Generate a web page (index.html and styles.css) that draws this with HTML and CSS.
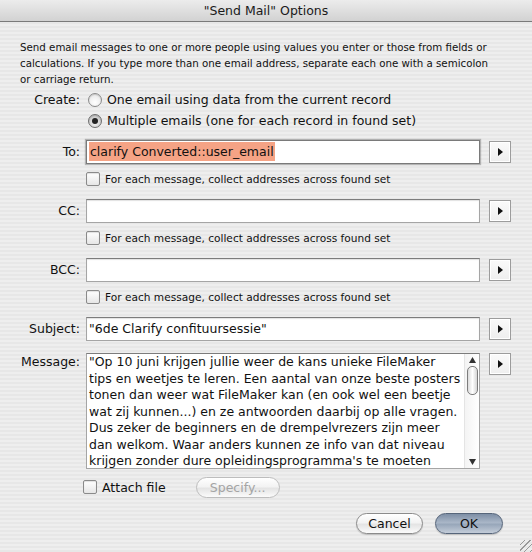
FILE: index.html
```html
<!DOCTYPE html>
<html>

<head>
    <title>"Send Mail" Options</title>
    <link rel="stylesheet" href="styles.css">
</head>

<body>
    <div class="window">
        <div class="titlebar">"Send Mail" Options</div>

        <div class="content">
            <p class="intro">Send email messages to one or more people using values you enter or those from fields or<br>
                calculations. If you type more than one email address, separate each one with a semicolon<br>
                or carriage return.</p>

            <div class="row create-row">
                <div class="label">Create:</div>
                <div class="options">
                    <div class="radio-line"><span class="radio"></span>One email using data from the current record</div>
                    <div class="radio-line"><span class="radio checked"></span>Multiple emails (one for each record in found set)</div>
                </div>
            </div>

            <div class="row field-row first">
                <div class="label">To:</div>
                <div class="field focused"><span class="selected-text">clarify Converted::user_email</span></div>
                <div class="pick-btn"><svg width="5" height="8" viewBox="0 0 5 8"><path d="M0 0 L5 4 L0 8 Z" fill="#111"/></svg></div>
            </div>
            <div class="check-line"><span class="checkbox"></span>For each message, collect addresses across found set</div>

            <div class="row field-row">
                <div class="label">CC:</div>
                <div class="field"></div>
                <div class="pick-btn"><svg width="5" height="8" viewBox="0 0 5 8"><path d="M0 0 L5 4 L0 8 Z" fill="#111"/></svg></div>
            </div>
            <div class="check-line"><span class="checkbox"></span>For each message, collect addresses across found set</div>

            <div class="row field-row">
                <div class="label">BCC:</div>
                <div class="field"></div>
                <div class="pick-btn"><svg width="5" height="8" viewBox="0 0 5 8"><path d="M0 0 L5 4 L0 8 Z" fill="#111"/></svg></div>
            </div>
            <div class="check-line"><span class="checkbox"></span>For each message, collect addresses across found set</div>

            <div class="row field-row">
                <div class="label">Subject:</div>
                <div class="field">"6de Clarify confituursessie"</div>
                <div class="pick-btn"><svg width="5" height="8" viewBox="0 0 5 8"><path d="M0 0 L5 4 L0 8 Z" fill="#111"/></svg></div>
            </div>

            <div class="row message-row">
                <div class="label">Message:</div>
                <div class="textarea">
                    <div class="message-text">"Op 10 juni krijgen jullie weer de kans unieke FileMaker<br>
                        tips en weetjes te leren. Een aantal van onze beste posters<br>
                        tonen dan weer wat FileMaker kan (en ook wel een beetje<br>
                        wat zij kunnen...) en ze antwoorden daarbij op alle vragen.<br>
                        Dus zeker de beginners en de drempelvrezers zijn meer<br>
                        dan welkom. Waar anders kunnen ze info van dat niveau<br>
                        krijgen zonder dure opleidingsprogramma's te moeten</div>
                    <div class="scrollbar">
                        <svg class="scroll-arrow" width="7" height="6" viewBox="0 0 7 6"><path d="M3.5 0 L7 6 L0 6 Z" fill="#333"/></svg>
                        <div class="scroll-thumb"></div>
                        <div class="scroll-track"></div>
                        <svg class="scroll-arrow" width="7" height="6" viewBox="0 0 7 6"><path d="M0 0 L7 0 L3.5 6 Z" fill="#333"/></svg>
                    </div>
                </div>
                <div class="pick-btn"><svg width="5" height="8" viewBox="0 0 5 8"><path d="M0 0 L5 4 L0 8 Z" fill="#111"/></svg></div>
            </div>

            <div class="attach-row">
                <span class="checkbox"></span>
                <span class="attach-label">Attach file</span>
                <div class="btn disabled">Specify...</div>
            </div>

            <div class="button-row">
                <div class="btn">Cancel</div>
                <div class="btn default">OK</div>
            </div>
        </div>

        <div class="grip"></div>
    </div>
</body>

</html>
```

FILE: styles.css
```css
body {
    margin: 0;
    font-family: "DejaVu Sans", sans-serif;
    color: #111;
}

.window {
    position: relative;
    width: 532px;
    height: 552px;
    overflow: hidden;
    background: repeating-linear-gradient(#eeeeee 0 2px, #e7e7e7 2px 4px);
}

.titlebar {
    height: 21px;
    line-height: 22px;
    text-align: center;
    font-size: 12.5px;
    color: #1a1a1a;
    background: linear-gradient(#ececec, #d2d2d2);
    border-bottom: 1px solid #7a7a7a;
}

.intro {
    margin: 17px 0 0 20px;
    font-size: 10.25px;
    line-height: 16px;
    white-space: nowrap;
}

.row {
    display: flex;
}

.label {
    width: 80px;
    margin-right: 6px;
    text-align: right;
    font-size: 12.5px;
    flex-shrink: 0;
}

/* Create radios */
.create-row {
    margin-top: 2px;
}

.create-row .label {
    line-height: 21px;
}

.radio-line {
    display: flex;
    align-items: center;
    height: 21px;
    font-size: 12.5px;
    padding-left: 2px;
}

.radio {
    width: 12px;
    height: 12px;
    border-radius: 50%;
    border: 1px solid #8a8a8a;
    background: radial-gradient(circle at 50% 70%, #ffffff, #e2e2e2);
    margin-right: 5px;
    position: relative;
    box-shadow: inset 0 1px 1px rgba(0, 0, 0, 0.15);
}

.radio.checked {
    background: radial-gradient(circle at 50% 70%, #f0f0f0, #b9b9b9);
    border-color: #6e6e6e;
}

.radio.checked::after {
    content: "";
    position: absolute;
    left: 3px;
    top: 3px;
    width: 6px;
    height: 6px;
    border-radius: 50%;
    background: #222;
}

/* text fields */
.field-row {
    align-items: center;
    margin-top: 10px;
}

.field-row.first {
    margin-top: 9px;
}

.field-row .label {
    line-height: 24px;
}

.field {
    box-sizing: border-box;
    width: 394px;
    height: 24px;
    padding-left: 2px;
    font-size: 12.5px;
    line-height: 22px;
    white-space: nowrap;
    background: #fff;
    border: 1px solid #a5a5a5;
    border-top-color: #7c7c7c;
    box-shadow: inset 0 1px 1px rgba(0, 0, 0, 0.12);
}

.field.focused {
    border-color: #7a7a7a;
    box-shadow: 0 0 1px 1px rgba(110, 110, 110, 0.45);
}

.selected-text {
    background: #f5a385;
    padding: 2px 1px 2px 1px;
}

.pick-btn {
    box-sizing: border-box;
    width: 22px;
    height: 22px;
    margin-left: 9px;
    display: flex;
    align-items: center;
    justify-content: center;
    border: 1px solid #9c9c9c;
    background: linear-gradient(#fafafa, #eeeeee);
    box-shadow: inset 0 0 0 1px #ffffff;
}

/* checkboxes */
.check-line {
    display: flex;
    align-items: center;
    height: 20px;
    margin: 5px 0 0 86px;
    font-size: 10.6px;
}

.checkbox {
    box-sizing: border-box;
    width: 14px;
    height: 14px;
    border: 1px solid #8a8a8a;
    border-radius: 2px;
    background: linear-gradient(#ffffff, #e6e6e6);
    box-shadow: inset 0 1px 1px rgba(0, 0, 0, 0.12);
    margin-right: 5px;
    flex-shrink: 0;
}

/* message */
.message-row {
    margin-top: 12px;
    align-items: flex-start;
}

.message-row .label {
    line-height: 18px;
}

.textarea {
    box-sizing: border-box;
    width: 394px;
    height: 116px;
    display: flex;
    background: #fff;
    border: 1px solid #a5a5a5;
    border-top-color: #7c7c7c;
}

.message-text {
    flex: 1;
    overflow: hidden;
    padding: 0 0 0 2px;
    font-size: 12.5px;
    line-height: 16.55px;
    white-space: nowrap;
}

.scrollbar {
    width: 15px;
    display: flex;
    flex-direction: column;
    align-items: center;
    padding: 3px 0;
    box-sizing: border-box;
    border-left: 1px solid #e4e4e4;
    background: linear-gradient(90deg, #f4f4f4, #ffffff);
}

.scroll-thumb {
    width: 9px;
    height: 27px;
    margin-top: 3px;
    border: 1px solid #7d7d7d;
    border-radius: 5px;
    background: linear-gradient(90deg, #dcdcdc, #ffffff 50%, #d6d6d6);
}

.scroll-track {
    flex: 1;
}

/* attach */
.attach-row {
    display: flex;
    align-items: center;
    height: 22px;
    margin: 7px 0 0 83px;
}

.attach-label {
    font-size: 12.5px;
}

/* buttons */
.btn {
    box-sizing: border-box;
    height: 21px;
    line-height: 19px;
    padding: 0 16px;
    font-size: 12.5px;
    text-align: center;
    border: 1px solid #8b8b8b;
    border-radius: 11px;
    background: linear-gradient(#ffffff, #f3f3f3 45%, #e4e4e4 55%, #fbfbfb);
    box-shadow: 0 1px 1px rgba(0, 0, 0, 0.18);
}

.btn.disabled {
    margin-left: 30px;
    width: 84px;
    padding: 0;
    color: #a4a4a4;
    border-color: #bdbdbd;
    box-shadow: none;
}

.button-row {
    display: flex;
    justify-content: flex-end;
    gap: 12px;
    margin: 15px 29px 0 0;
}

.button-row .btn {
    width: 67px;
    padding: 0;
}

.btn.default {
    width: 68px;
    border-color: #56657a;
    background: linear-gradient(#7d8ea5, #a9b6c7 45%, #98a7ba 55%, #c3ccd8);
}

.grip {
    position: absolute;
    right: 0;
    bottom: 0;
    width: 12px;
    height: 12px;
    background: repeating-linear-gradient(135deg, transparent 0 3px, #9a9a9a 3px 4px);
}
```
